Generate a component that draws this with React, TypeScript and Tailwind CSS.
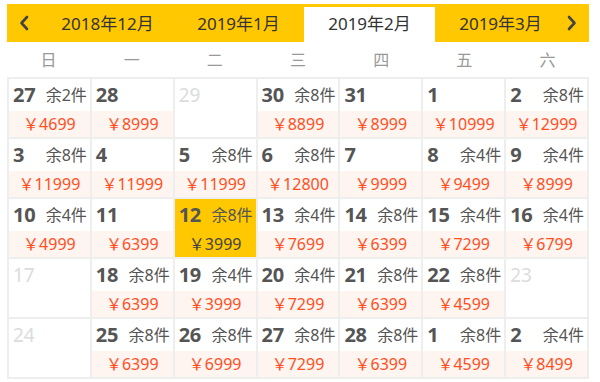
import React from "react";

type Cell = { d: number; left?: string; price?: string; off?: boolean; sel?: boolean };

const rows: Cell[][] = [
  [
    { d: 27, left: "余2件", price: "4699" },
    { d: 28, price: "8999" },
    { d: 29, off: true },
    { d: 30, left: "余8件", price: "8899" },
    { d: 31, price: "8999" },
    { d: 1, price: "10999" },
    { d: 2, left: "余8件", price: "12999" },
  ],
  [
    { d: 3, left: "余8件", price: "11999" },
    { d: 4, price: "11999" },
    { d: 5, left: "余8件", price: "11999" },
    { d: 6, left: "余8件", price: "12800" },
    { d: 7, price: "9999" },
    { d: 8, left: "余4件", price: "9499" },
    { d: 9, left: "余4件", price: "8999" },
  ],
  [
    { d: 10, left: "余4件", price: "4999" },
    { d: 11, price: "6399" },
    { d: 12, left: "余8件", price: "3999", sel: true },
    { d: 13, left: "余4件", price: "7699" },
    { d: 14, left: "余8件", price: "6399" },
    { d: 15, left: "余4件", price: "7299" },
    { d: 16, left: "余4件", price: "6799" },
  ],
  [
    { d: 17, off: true },
    { d: 18, left: "余8件", price: "6399" },
    { d: 19, left: "余4件", price: "3999" },
    { d: 20, left: "余4件", price: "7299" },
    { d: 21, left: "余8件", price: "6399" },
    { d: 22, left: "余8件", price: "4599" },
    { d: 23, off: true },
  ],
  [
    { d: 24, off: true },
    { d: 25, left: "余8件", price: "6399" },
    { d: 26, left: "余8件", price: "6999" },
    { d: 27, left: "余8件", price: "7299" },
    { d: 28, left: "余8件", price: "6399" },
    { d: 1, left: "余8件", price: "4599" },
    { d: 2, left: "余4件", price: "8499" },
  ],
];

const weekdays = ["日", "一", "二", "三", "四", "五", "六"];
const months = ["2018年12月", "2019年1月", "2019年2月", "2019年3月"];

function Chevron({ dir }: { dir: "l" | "r" }) {
  return (
    <svg width="11" height="16" viewBox="0 0 11 16">
      <polyline
        points={dir === "l" ? "8,2 2.5,8 8,14" : "3,2 8.5,8 3,14"}
        fill="none"
        stroke="#444"
        strokeWidth="2.6"
        strokeLinecap="round"
        strokeLinejoin="round"
      />
    </svg>
  );
}

function DayCell({ c }: { c: Cell }) {
  if (c.off) {
    return (
      <div className="h-[58px] bg-white px-[4px] pt-[4px]">
        <span className="text-[19px] leading-[24px] text-[#dcdcdc]">{c.d}</span>
      </div>
    );
  }
  return (
    <div className={`h-[58px] flex flex-col ${c.sel ? "bg-[#ffc800]" : "bg-white"}`}>
      <div className="h-[32px] flex items-center justify-between pl-[4px] pr-[3px]">
        <span className="text-[20px] font-bold text-[#555] leading-[24px] tracking-[-0.3px]">{c.d}</span>
        {c.left && <span className="text-[16px] text-[#555] leading-[24px]">{c.left}</span>}
      </div>
      <div
        className={`h-[26px] flex items-center justify-center text-[16px] ${
          c.sel ? "text-[#444]" : "bg-[#fff5f0] text-[#ff4f1f]"
        }`}
      >
        {c.price ? `￥${c.price}` : ""}
      </div>
    </div>
  );
}

export default function App() {
  return (
    <div
      className="w-[600px] h-[382px] bg-white pl-[7px] pt-[4px]"
      style={{ fontFamily: '"Noto Sans", "Noto Sans CJK SC", sans-serif' }}
    >
      <div className="w-[582px]">
        <div className="h-[38px] bg-[#ffc800] flex items-end">
          <div className="w-[35px] h-full flex items-center justify-center">
            <Chevron dir="l" />
          </div>
          {months.map((m, i) => (
            <div
              key={m}
              className={`w-[131px] flex items-center justify-center text-[17px] text-[#333] ${
                i === 2 ? "h-[35px] bg-white pb-[1px]" : "h-full pt-[2px]"
              }`}
            >
              {m}
            </div>
          ))}
          <div className="flex-1 h-full flex items-center">
            <Chevron dir="r" />
          </div>
        </div>
        <div className="h-[35px] grid grid-cols-7 items-center">
          {weekdays.map((w) => (
            <div key={w} className="text-center text-[16px] text-[#999]">
              {w}
            </div>
          ))}
        </div>
        <div className="bg-[#eeeeee] p-[2px] grid grid-cols-7 gap-[2px]">
          {rows.flat().map((c, i) => (
            <DayCell key={i} c={c} />
          ))}
        </div>
      </div>
    </div>
  );
}
